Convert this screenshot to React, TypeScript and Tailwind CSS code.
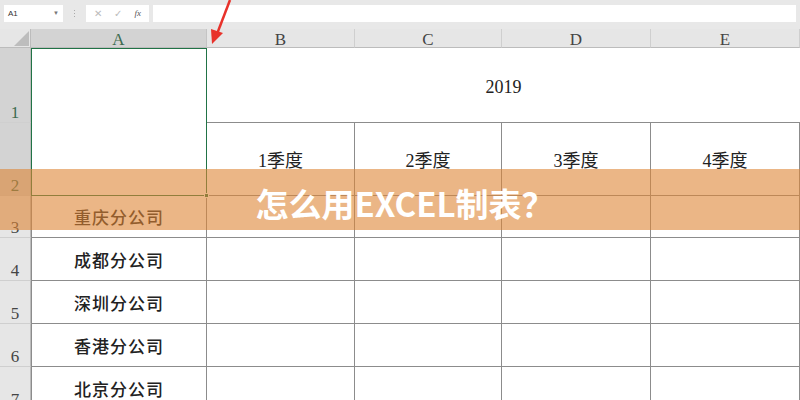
import React from "react";

const cjk = { fontFamily: '"Liberation Serif", "Noto Sans CJK SC", serif' };

const branches = ["重庆分公司", "成都分公司", "深圳分公司", "香港分公司", "北京分公司"];
const cols = ["B", "C", "D", "E"];

function RowHead({ n, active }: { n: number; active?: boolean }) {
  return (
    <div
      className={
        "flex items-end justify-center border-r border-b border-r-[#bcbcbc] border-b-[#cfcfcf] pb-[1px] text-[17px] leading-none " +
        (active ? "bg-[#d3d3d3] text-[#3d6b50]" : "bg-[#e6e6e6] text-[#444]")
      }
    >
      {n}
    </div>
  );
}

function Cell({ children }: { children?: React.ReactNode }) {
  return (
    <div className="flex items-center justify-center border-r border-b border-[#8c8c8c] pt-[5px] text-[18px] text-[#222]">
      {children}
    </div>
  );
}

export default function App() {
  return (
    <div className="relative h-[400px] w-[800px] overflow-hidden bg-white" style={cjk}>
      {/* toolbar */}
      <div className="flex h-[29px] items-start gap-[4px] bg-[#e8e8e8] px-[4px] pt-[5px]">
        <div className="flex h-[17px] w-[59px] items-center justify-between bg-white px-[4px] font-['Liberation_Sans'] text-[8px] text-[#333]">
          <span>A1</span>
          <span className="text-[6px] text-[#777]">▼</span>
        </div>
        <div className="flex h-[17px] w-[15px] flex-col items-center justify-center gap-[2px]">
          <span className="h-[1px] w-[1px] bg-[#aaa]" />
          <span className="h-[1px] w-[1px] bg-[#aaa]" />
          <span className="h-[1px] w-[1px] bg-[#aaa]" />
        </div>
        <div className="flex h-[17px] w-[63px] items-center justify-around bg-white px-[2px] text-[10px] text-[#bbb]">
          <span className="font-['Liberation_Sans']">✕</span>
          <span className="font-['DejaVu_Sans']">✓</span>
          <span className="font-['Liberation_Serif'] text-[9px] italic text-[#555]">fx</span>
        </div>
        <div className="h-[17px] flex-1 bg-white" />
      </div>

      {/* sheet */}
      <div className="grid grid-cols-[31px_176px_148px_147px_149px_149px] grid-rows-[19px_75px_73px_42px_43px_43px_43px_43px]">
        {/* corner */}
        <div className="relative border-r border-b border-r-[#bcbcbc] border-b-[#bcbcbc] bg-[#e6e6e6]">
          <svg className="absolute right-[1px] bottom-[1px]" width="15" height="15">
            <polygon points="15,0 15,15 0,15" fill="#bdbdbd" />
          </svg>
        </div>
        <div className="flex items-center justify-center border-r border-b border-r-[#c4c4c4] border-b-[#bcbcbc] bg-[#d3d3d3] pt-[4px] text-[17px] text-[#3d6b50]">
          A
        </div>
        {cols.map((c) => (
          <div
            key={c}
            className="flex items-center justify-center border-r border-b border-r-[#cfcfcf] border-b-[#bcbcbc] bg-[#e6e6e6] pt-[4px] text-[17px] text-[#444]"
          >
            {c}
          </div>
        ))}

        {/* rows 1-2 */}
        <RowHead n={1} active />
        <div className="relative row-span-2 border border-[#217346] bg-white">
          <div className="absolute -right-[3px] -bottom-[3px] h-[5px] w-[5px] border border-white bg-[#217346]" />
        </div>
        <div className="col-span-4 flex items-center justify-center border-b border-[#8c8c8c] pt-[5px] text-[18px] text-[#222]">
          2019
        </div>
        <RowHead n={2} active />
        {["1季度", "2季度", "3季度", "4季度"].map((q) => (
          <Cell key={q}>{q}</Cell>
        ))}

        {/* branch rows */}
        {branches.map((b, i) => (
          <React.Fragment key={b}>
            <RowHead n={i + 3} />
            <div className="flex items-center justify-center border-r border-b border-l border-[#8c8c8c] pt-[5px] text-[17px] font-medium tracking-[1px] text-[#222]">
              {b}
            </div>
            {cols.map((c) => (
              <Cell key={c} />
            ))}
          </React.Fragment>
        ))}
      </div>

      {/* banner */}
      <div className="absolute top-[169px] left-0 flex h-[61px] w-full items-center justify-center bg-[rgba(222,133,54,0.6)] pt-[8px] pl-[10px]">
        <span className="font-['Noto_Sans_CJK_SC','Noto_Sans',sans-serif] text-[33px] font-bold text-white">
          怎么用EXCEL制表？
        </span>
      </div>

      {/* arrow */}
      <svg className="absolute top-0 left-[204px]" width="32" height="48" viewBox="0 0 32 48">
        <line x1="26" y1="0" x2="13" y2="34" stroke="#e8322b" strokeWidth="2.5" />
        <polygon points="8,44 7,29 19,33" fill="#e8322b" />
      </svg>
    </div>
  );
}
